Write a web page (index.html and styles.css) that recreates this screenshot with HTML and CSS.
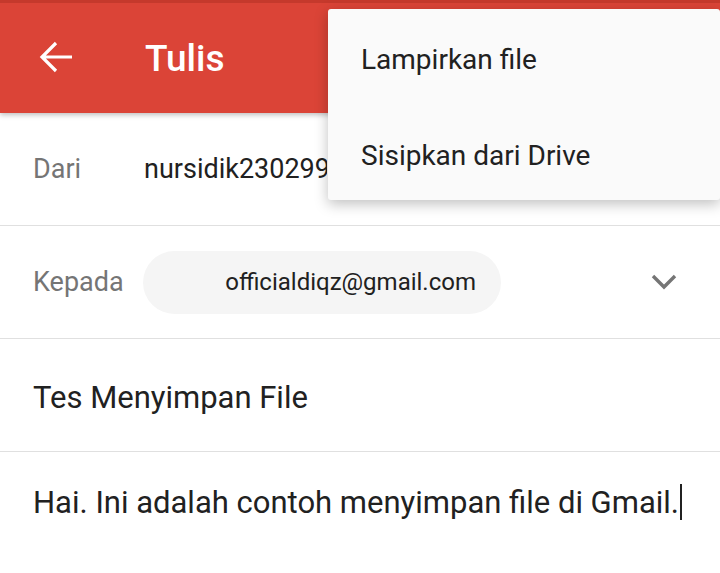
FILE: index.html
```html
<!DOCTYPE html>
<html lang="id">
<head>
  <meta charset="UTF-8">
  <meta name="viewport" content="width=device-width, initial-scale=1.0">
  <title>Tulis</title>
  <link rel="stylesheet" href="styles.css">
</head>
<body>
  <header class="appbar">
    <svg class="back" width="34" height="32" viewBox="0 0 34 32">
      <path d="M33 16H3M17 2L3 16l14 14" fill="none" stroke="#fff" stroke-width="3.2"/>
    </svg>
    <h1 class="title">Tulis</h1>
  </header>

  <div class="row">
    <span class="label">Dari</span>
    <span class="value">nursidik230299@gmail.com</span>
  </div>

  <div class="row">
    <span class="label">Kepada</span>
    <span class="chip">officialdiqz@gmail.com</span>
    <svg class="chevron" width="26" height="16" viewBox="0 0 26 16">
      <path d="M2 2l11 11L24 2" fill="none" stroke="#757575" stroke-width="3.4"/>
    </svg>
  </div>

  <div class="row subject">Tes Menyimpan File</div>

  <div class="body-text">Hai. Ini adalah contoh menyimpan file di Gmail.<span class="cursor"></span></div>

  <!-- overflow menu -->
  <div class="menu">
    <div class="menu-item">Lampirkan file</div>
    <div class="menu-item">Sisipkan dari Drive</div>
  </div>
</body>
</html>
```

FILE: styles.css
```css
body {
  margin: 0;
  font-family: Roboto, "Noto Sans", Arial, sans-serif;
  background-color: #fff;
  color: #212121;
  width: 720px;
  height: 573px;
  overflow: hidden;
  position: relative;
}
.appbar {
  height: 110px;
  background-color: #db4437;
  border-top: 3px solid #c5392c;
  display: flex;
  align-items: center;
  padding-left: 39px;
  box-shadow: 0 2px 5px rgba(0, 0, 0, 0.25);
  position: relative;
  z-index: 1;
}
.back {
  display: block;
  margin-top: -2px;
}
.title {
  margin: 0 0 0 72px;
  color: #fff;
  font-size: 37px;
  font-weight: 500;
}
.row {
  height: 112px;
  border-bottom: 1px solid #e0e0e0;
  display: flex;
  align-items: center;
  padding-left: 33px;
  font-size: 27px;
}
.label {
  color: #757575;
  width: 111px;
  flex: none;
}
.value {
  color: #212121;
  white-space: nowrap;
  width: 183px;
  overflow: hidden;
}
.chip {
  background-color: #f5f5f5;
  border-radius: 32px;
  height: 63px;
  width: 358px;
  display: flex;
  align-items: center;
  justify-content: flex-end;
  padding-right: 25px;
  box-sizing: border-box;
  font-size: 24px;
  white-space: nowrap;
  margin-left: -1px;
}
.chevron {
  margin-left: 150px;
}
.subject {
  font-size: 31px;
  padding-top: 4px;
  height: 108px;
}
.body-text {
  padding-left: 33px;
  font-size: 31px;
  display: flex;
  align-items: center;
  height: 100px;
  white-space: nowrap;
}
.cursor {
  display: inline-block;
  width: 2px;
  height: 36px;
  background-color: #212121;
  margin-left: 1px;
}
.menu {
  position: absolute;
  top: 9px;
  left: 328px;
  width: 392px;
  height: 191px;
  background-color: #fafafa;
  border-radius: 3px;
  box-shadow: 0 4px 14px rgba(0, 0, 0, 0.25);
  padding-top: 2px;
  box-sizing: border-box;
  z-index: 2;
}
.menu-item {
  height: 96px;
  display: flex;
  align-items: center;
  padding-left: 33px;
  font-size: 28px;
  color: #212121;
}
```
